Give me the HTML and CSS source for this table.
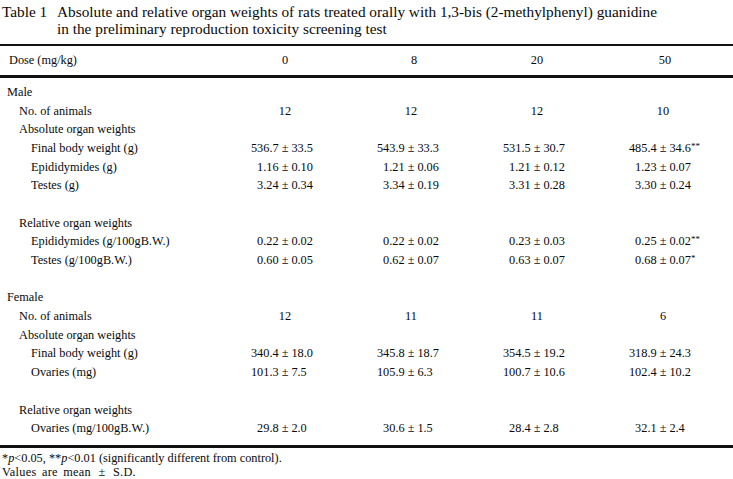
FILE: index.html
```html
<!DOCTYPE html>
<html lang="en">
<head>
<meta charset="utf-8">
<title>Table 1</title>
<link rel="stylesheet" href="styles.css">
</head>
<body>
<div class="page">
  <div class="caption">
    <span class="cap-no">Table 1</span>
    <span class="cap-text">Absolute and relative organ weights of rats treated orally with 1,3-bis (2-methylphenyl) guanidine<br>in the preliminary reproduction toxicity screening test</span>
  </div>
  <table class="data">
    <colgroup>
      <col class="c-label"><col class="c-val"><col class="c-val"><col class="c-val"><col class="c-val"><col class="c-fill">
    </colgroup>
    <thead>
      <tr class="head">
        <th class="lab l0">Dose (mg/kg)</th><th>0</th><th class="h8">8</th><th>20</th><th class="h50">50</th><th></th>
      </tr>
    </thead>
    <tbody>
      <tr class="pad-top"><td colspan="6"></td></tr>
      <tr><td class="lab l0">Male</td><td></td><td></td><td></td><td></td><td></td></tr>
      <tr><td class="lab l1">No. of animals</td><td class="n">12</td><td class="n">12</td><td class="n">12</td><td class="n">10</td><td></td></tr>
      <tr><td class="lab l1">Absolute organ weights</td><td></td><td></td><td></td><td></td><td></td></tr>
      <tr><td class="lab l2">Final body weight (g)</td>
        <td><div class="v"><span class="m">536.7</span><span class="pm">±</span><span class="s">33.5</span></div></td>
        <td><div class="v"><span class="m">543.9</span><span class="pm">±</span><span class="s">33.3</span></div></td>
        <td><div class="v"><span class="m">531.5</span><span class="pm">±</span><span class="s">30.7</span></div></td>
        <td><div class="v"><span class="m">485.4</span><span class="pm">±</span><span class="s">34.6<sup>**</sup></span></div></td><td></td></tr>
      <tr><td class="lab l2">Epididymides (g)</td>
        <td><div class="v"><span class="m">1.16</span><span class="pm">±</span><span class="s">0.10</span></div></td>
        <td><div class="v"><span class="m">1.21</span><span class="pm">±</span><span class="s">0.06</span></div></td>
        <td><div class="v"><span class="m">1.21</span><span class="pm">±</span><span class="s">0.12</span></div></td>
        <td><div class="v"><span class="m">1.23</span><span class="pm">±</span><span class="s">0.07</span></div></td><td></td></tr>
      <tr><td class="lab l2">Testes (g)</td>
        <td><div class="v"><span class="m">3.24</span><span class="pm">±</span><span class="s">0.34</span></div></td>
        <td><div class="v"><span class="m">3.34</span><span class="pm">±</span><span class="s">0.19</span></div></td>
        <td><div class="v"><span class="m">3.31</span><span class="pm">±</span><span class="s">0.28</span></div></td>
        <td><div class="v"><span class="m">3.30</span><span class="pm">±</span><span class="s">0.24</span></div></td><td></td></tr>
      <tr class="blank"><td colspan="6"></td></tr>
      <tr><td class="lab l1">Relative organ weights</td><td></td><td></td><td></td><td></td><td></td></tr>
      <tr><td class="lab l2">Epididymides (g/100gB.W.)</td>
        <td><div class="v"><span class="m">0.22</span><span class="pm">±</span><span class="s">0.02</span></div></td>
        <td><div class="v"><span class="m">0.22</span><span class="pm">±</span><span class="s">0.02</span></div></td>
        <td><div class="v"><span class="m">0.23</span><span class="pm">±</span><span class="s">0.03</span></div></td>
        <td><div class="v"><span class="m">0.25</span><span class="pm">±</span><span class="s">0.02<sup>**</sup></span></div></td><td></td></tr>
      <tr><td class="lab l2">Testes (g/100gB.W.)</td>
        <td><div class="v"><span class="m">0.60</span><span class="pm">±</span><span class="s">0.05</span></div></td>
        <td><div class="v"><span class="m">0.62</span><span class="pm">±</span><span class="s">0.07</span></div></td>
        <td><div class="v"><span class="m">0.63</span><span class="pm">±</span><span class="s">0.07</span></div></td>
        <td><div class="v"><span class="m">0.68</span><span class="pm">±</span><span class="s">0.07<sup>*</sup></span></div></td><td></td></tr>
      <tr class="blank"><td colspan="6"></td></tr>
      <tr><td class="lab l0">Female</td><td></td><td></td><td></td><td></td><td></td></tr>
      <tr><td class="lab l1">No. of animals</td><td class="n">12</td><td class="n">11</td><td class="n">11</td><td class="n">6</td><td></td></tr>
      <tr><td class="lab l1">Absolute organ weights</td><td></td><td></td><td></td><td></td><td></td></tr>
      <tr><td class="lab l2">Final body weight (g)</td>
        <td><div class="v"><span class="m">340.4</span><span class="pm">±</span><span class="s">18.0</span></div></td>
        <td><div class="v"><span class="m">345.8</span><span class="pm">±</span><span class="s">18.7</span></div></td>
        <td><div class="v"><span class="m">354.5</span><span class="pm">±</span><span class="s">19.2</span></div></td>
        <td><div class="v"><span class="m">318.9</span><span class="pm">±</span><span class="s">24.3</span></div></td><td></td></tr>
      <tr><td class="lab l2">Ovaries (mg)</td>
        <td><div class="v"><span class="m">101.3</span><span class="pm">±</span><span class="s">7.5</span></div></td>
        <td><div class="v"><span class="m">105.9</span><span class="pm">±</span><span class="s">6.3</span></div></td>
        <td><div class="v"><span class="m">100.7</span><span class="pm">±</span><span class="s">10.6</span></div></td>
        <td><div class="v"><span class="m">102.4</span><span class="pm">±</span><span class="s">10.2</span></div></td><td></td></tr>
      <tr class="blank"><td colspan="6"></td></tr>
      <tr><td class="lab l1">Relative organ weights</td><td></td><td></td><td></td><td></td><td></td></tr>
      <tr><td class="lab l2">Ovaries (mg/100gB.W.)</td>
        <td><div class="v"><span class="m">29.8</span><span class="pm">±</span><span class="s">2.0</span></div></td>
        <td><div class="v"><span class="m">30.6</span><span class="pm">±</span><span class="s">1.5</span></div></td>
        <td><div class="v"><span class="m">28.4</span><span class="pm">±</span><span class="s">2.8</span></div></td>
        <td><div class="v"><span class="m">32.1</span><span class="pm">±</span><span class="s">2.4</span></div></td><td></td></tr>
      <tr class="pad-bottom"><td colspan="6"></td></tr>
    </tbody>
  </table>
  <div class="notes">
    <p>*<i>p</i>&lt;0.05, **<i>p</i>&lt;0.01 (significantly different from control).</p>
    <p class="wide">Values are mean <span class="pm-wide">±</span> S.D.</p>
  </div>
</div>
</body>
</html>
```

FILE: styles.css
```css
html, body {
  margin: 0;
  padding: 0;
  background: #ffffff;
}

body {
  font-family: "Liberation Serif", "Times New Roman", serif;
  color: #0a0a0a;
}

.page {
  width: 733px;
}

.caption {
  display: flex;
  font-size: 15.3px;
  line-height: 17px;
  padding: 3px 0 0 2px;
  height: 44px;
  box-sizing: border-box;
}

.cap-no {
  width: 55px;
  flex: none;
}

.data {
  width: 733px;
  border-collapse: collapse;
  table-layout: fixed;
  font-size: 12.3px;
  border-top: 2px solid #111;
  border-bottom: 3px solid #111;
}

.c-label { width: 222px; }
.c-val { width: 126px; }
.c-fill { width: 7px; }

.data th,
.data td {
  padding: 0;
  font-weight: normal;
  white-space: nowrap;
}

.head th {
  height: 29px;
  text-align: center;
  border-bottom: 3px solid #111;
}

.head th.lab { text-align: left; }
.head th.h8 { padding-left: 6px; }
.head th.h50 { padding-left: 4px; }

.data tbody tr { height: 18.7px; }
.data tbody tr.pad-top { height: 6.5px; }
.data tbody tr.pad-bottom { height: 8px; }

.lab { text-align: left; }
.l0 { padding-left: 7px !important; }
.data th.l0 { padding-left: 9px !important; }
.l1 { padding-left: 19px !important; }
.l2 { padding-left: 31px !important; }

.n { text-align: center; }

.v {
  display: grid;
  grid-template-columns: 1fr auto 1fr;
}

.m { text-align: right; }
.s { text-align: left; }
.pm { padding: 0 3px; }

.s sup {
  font-size: 9px;
  line-height: 0;
  vertical-align: 3px;
}

.notes {
  font-size: 12.3px;
  line-height: 11px;
  padding: 5px 0 0 2px;
}

.notes p { margin: 0; }

.notes p + p { margin-top: 3px; }

.notes .wide {
  letter-spacing: 0.3px;
  word-spacing: 2px;
}

.pm-wide { padding: 0 2px; }
```
